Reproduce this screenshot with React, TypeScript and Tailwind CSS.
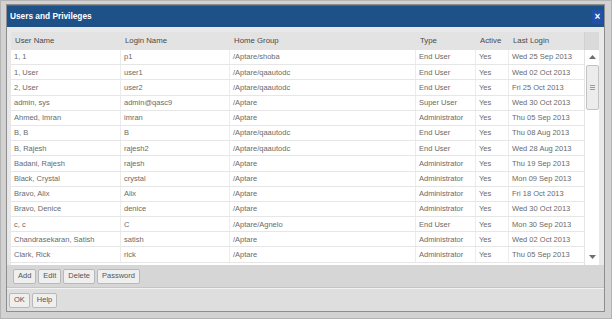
const rows: string[][] = [
  ["1, 1", "p1", "/Aptare/shoba", "End User", "Yes", "Wed 25 Sep 2013"],
  ["1, User", "user1", "/Aptare/qaautodc", "End User", "Yes", "Wed 02 Oct 2013"],
  ["2, User", "user2", "/Aptare/qaautodc", "End User", "Yes", "Fri 25 Oct 2013"],
  ["admin, sys", "admin@qasc9", "/Aptare", "Super User", "Yes", "Wed 30 Oct 2013"],
  ["Ahmed, Imran", "imran", "/Aptare", "Administrator", "Yes", "Thu 05 Sep 2013"],
  ["B, B", "B", "/Aptare/qaautodc", "End User", "Yes", "Thu 08 Aug 2013"],
  ["B, Rajesh", "rajesh2", "/Aptare/qaautodc", "End User", "Yes", "Wed 28 Aug 2013"],
  ["Badani, Rajesh", "rajesh", "/Aptare", "Administrator", "Yes", "Thu 19 Sep 2013"],
  ["Black, Crystal", "crystal", "/Aptare", "Administrator", "Yes", "Mon 09 Sep 2013"],
  ["Bravo, Alix", "Alix", "/Aptare", "Administrator", "Yes", "Fri 18 Oct 2013"],
  ["Bravo, Denice", "denice", "/Aptare", "Administrator", "Yes", "Wed 30 Oct 2013"],
  ["c, c", "C", "/Aptare/Agnelo", "End User", "Yes", "Mon 30 Sep 2013"],
  ["Chandrasekaran, Satish", "satish", "/Aptare", "Administrator", "Yes", "Wed 02 Oct 2013"],
  ["Clark, Rick", "rick", "/Aptare", "Administrator", "Yes", "Thu 05 Sep 2013"],
];

const headers = ["User Name", "Login Name", "Home Group", "Type", "Active", "Last Login"];

const cols = "grid grid-cols-[110px_109px_186px_60px_33px_75px]";

export default function App() {
  return (
    <div
      className="w-[612px] h-[319px] bg-[#d2d2d2] border border-[#b4b4b4] pl-[5px] pt-[3px] pr-[6px] pb-[6px]"
      style={{ fontFamily: '"Liberation Sans", Arial, sans-serif' }}
    >
      <div className="h-full border border-[#8e8e8e] flex flex-col bg-[#e9e9e9]">
        <div className="h-[22px] shrink-0 bg-[#1f5189] flex items-center justify-between pl-[3px] pr-[1px] border-t border-[#3a6aa0]">
          <span className="text-white font-bold text-[8.3px]">Users and Privileges</span>
          <span className="w-[11px] h-[14px] bg-[#2150a8] flex items-center justify-center text-white text-[10px] font-bold leading-none">
            ×
          </span>
        </div>

        <div className="pt-[5px] pl-[4px] pr-[5px] shrink-0">
          <div className="w-[588px] bg-white">
            <div className="flex h-[18px] bg-[#e3e3e3]">
              <div className={`${cols} w-[573px]`}>
                {headers.map((h) => (
                  <div key={h} className="flex items-center px-[4px] text-[7.8px] text-[#4a4a4a]">
                    {h}
                  </div>
                ))}
              </div>
              <div className="w-[15px] bg-[#dadada] border-l border-[#d0d0d0]" />
            </div>

            <div className="flex h-[215px]">
              <div className="w-[573px] overflow-hidden">
                {rows.map((r, i) => (
                  <div key={i} className={`${cols} h-[15.2px] border-b border-[#e6e6e6]`}>
                    {r.map((c, j) => (
                      <div
                        key={j}
                        className={`flex items-center px-[3px] text-[7.5px] text-[#6a6a6a] whitespace-nowrap ${
                          j < 5 ? "border-r border-[#ececec]" : ""
                        }`}
                      >
                        {c}
                      </div>
                    ))}
                  </div>
                ))}
              </div>
              <div className="w-[15px] flex flex-col items-center border-l border-[#e4e4e4] bg-white">
                <svg width="7" height="4" viewBox="0 0 7 4" className="mt-[5px]">
                  <path d="M0 4 L3.5 0 L7 4 Z" fill="#6e6e6e" />
                </svg>
                <div className="mt-[6px] w-[13px] h-[45px] bg-[#ececec] border border-[#c2c2c2] rounded-[2px] flex flex-col items-center justify-center gap-[1px]">
                  <div className="w-[5px] h-px bg-[#9a9a9a]" />
                  <div className="w-[5px] h-px bg-[#9a9a9a]" />
                  <div className="w-[5px] h-px bg-[#9a9a9a]" />
                </div>
                <div className="flex-1" />
                <svg width="7" height="4" viewBox="0 0 7 4" className="mb-[6px]">
                  <path d="M0 0 L3.5 4 L7 0 Z" fill="#6e6e6e" />
                </svg>
              </div>
            </div>
          </div>
        </div>

        <div className="h-[23px] shrink-0 bg-[#d6d6d6] flex items-center gap-[2px] pl-[6px] border-b border-[#c6c6c6]">
          {["Add", "Edit", "Delete", "Password"].map((b) => (
            <Btn key={b} label={b} />
          ))}
        </div>
        <div className="flex-1 bg-[#dedede] border-t border-[#f2f2f2] flex items-center gap-[2px] pl-[2px]">
          <Btn label="OK" />
          <Btn label="Help" />
        </div>
      </div>
    </div>
  );
}

function Btn({ label }: { label: string }) {
  return (
    <div className="h-[15px] px-[4px] flex items-center bg-[#efefef] border border-[#b9b9b9] rounded-[2px] text-[7.5px] text-[#555]">
      {label}
    </div>
  );
}
